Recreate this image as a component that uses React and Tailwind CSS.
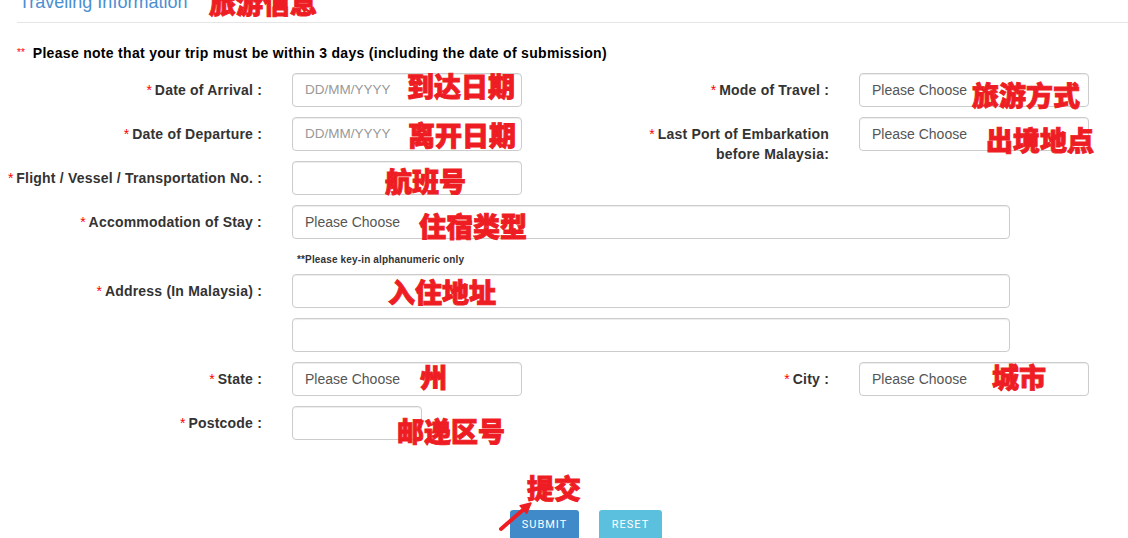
import React from 'react';

const RED = 'text-[#ee1d23]';

function Req() {
  return <span className="mr-[3px] font-normal tracking-normal text-[#f00]">*</span>;
}

function Box({ text, placeholder, wide, narrow }) {
  const w = wide ? 'w-[718px]' : narrow ? 'w-[130px]' : 'w-[230px]';
  return (
    <div
      className={`${w} h-[34px] shrink-0 rounded-[4px] border border-[#ccc] px-[12px] leading-[32px] shadow-[inset_0_1px_1px_rgba(0,0,0,0.075)] ${
        placeholder ? 'text-[13.5px] text-[#999]' : 'text-[14px] text-[#555]'
      }`}
    >
      {text}
    </div>
  );
}

function Label({ children, className = 'w-[262px]' }) {
  return (
    <div className={`${className} shrink-0 pt-[7px] text-right text-[14px] font-bold leading-[20px] tracking-[0.2px] text-[#333]`}>
      <Req />
      {children}
    </div>
  );
}

function Row({ label, box, right }) {
  return (
    <div className="flex h-[34px] items-start">
      <Label>{label}</Label>
      <div className="ml-[30px]">{box}</div>
      {right && (
        <>
          <Label className="w-[307px]">{right.label}</Label>
          <div className="ml-[30px]">{right.box}</div>
        </>
      )}
    </div>
  );
}

// red hand-written notes laid over the screenshot
const NOTES = [
  { t: '旅游信息', x: 'left-[209px]', y: 'top-[-11px]' },
  { t: '到达日期', x: 'left-[407px]', y: 'top-[72px]' },
  { t: '离开日期', x: 'left-[408px]', y: 'top-[121px]' },
  { t: '旅游方式', x: 'left-[972px]', y: 'top-[81px]' },
  { t: '出境地点', x: 'left-[986px]', y: 'top-[126px]' },
  { t: '航班号', x: 'left-[385px]', y: 'top-[167px]' },
  { t: '住宿类型', x: 'left-[419px]', y: 'top-[212px]' },
  { t: '入住地址', x: 'left-[388px]', y: 'top-[278px]' },
  { t: '州', x: 'left-[420px]', y: 'top-[363px]' },
  { t: '城市', x: 'left-[992px]', y: 'top-[363px]' },
  { t: '邮递区号', x: 'left-[397px]', y: 'top-[417px]' },
  { t: '提交', x: 'left-[527px]', y: 'top-[474px]' },
];

export default function App() {
  return (
    <div className="relative h-[538px] w-[1128px] overflow-hidden bg-white font-['Liberation_Sans',Arial,sans-serif]">
      <div className="-mt-[8px] ml-[17px] border-b border-[#e5e5e5] pb-[10px] pl-[2px] text-[18px] leading-[20px] text-[#4a8fd1]">
        Traveling Information
      </div>

      <div className="mt-[21px] flex items-center pl-[17px] text-[14px] font-bold leading-[18px] tracking-[0.3px] text-black">
        <span className="mr-[8px] text-[10px] font-normal tracking-normal text-[#f00]">**</span>
        Please note that your trip must be within 3 days (including the date of submission)
      </div>

      <div className="mt-[11px] flex flex-col gap-[10px]">
        <Row
          label="Date of Arrival :"
          box={<Box text="DD/MM/YYYY" placeholder />}
          right={{ label: 'Mode of Travel :', box: <Box text="Please Choose" /> }}
        />
        <Row
          label="Date of Departure :"
          box={<Box text="DD/MM/YYYY" placeholder />}
          right={{
            label: (
              <>
                Last Port of Embarkation
                <br />
                before Malaysia:
              </>
            ),
            box: <Box text="Please Choose" />,
          }}
        />
        <Row label="Flight / Vessel / Transportation No. :" box={<Box />} />
        <Row label="Accommodation of Stay :" box={<Box text="Please Choose" wide />} />
      </div>

      <div className="ml-[297px] mt-[14px] text-[10px] font-bold leading-[14px] tracking-[0.15px] text-[#333]">
        **Please key-in alphanumeric only
      </div>

      <div className="mt-[7px] flex flex-col gap-[10px]">
        <Row label="Address (In Malaysia) :" box={<Box wide />} />
        <div className="ml-[292px]">
          <Box wide />
        </div>
        <Row
          label="State :"
          box={<Box text="Please Choose" />}
          right={{ label: 'City :', box: <Box text="Please Choose" /> }}
        />
        <Row label="Postcode :" box={<Box narrow />} />
      </div>

      <div className="mt-[70px] flex gap-[20px] pl-[510px] font-['Roboto',sans-serif] text-[11px] tracking-[1px] text-white">
        <button className="h-[31px] w-[69px] rounded-[3px] bg-[#418ac9] uppercase">SUBMIT</button>
        <button className="h-[31px] w-[63px] rounded-[3px] bg-[#5bc0de] uppercase">RESET</button>
      </div>

      {NOTES.map((n) => (
        <div
          key={n.t}
          className={`absolute ${n.x} ${n.y} whitespace-nowrap font-['Noto_Sans_CJK_SC',sans-serif] text-[27px] font-black leading-[27px] [-webkit-text-stroke:0.9px_#ee1d23] ${RED}`}
        >
          {n.t}
        </div>
      ))}

      <svg className="absolute left-[495px] top-[498px]" width="42" height="38" viewBox="0 0 42 38">
        <line x1="6" y1="31" x2="29" y2="11" stroke="#ee1d23" strokeWidth="4" strokeLinecap="round" />
        <polygon points="36,5 31.7,15.3 25.1,7.7" fill="#ee1d23" stroke="#ee1d23" strokeWidth="1.5" strokeLinejoin="round" />
      </svg>
    </div>
  );
}
